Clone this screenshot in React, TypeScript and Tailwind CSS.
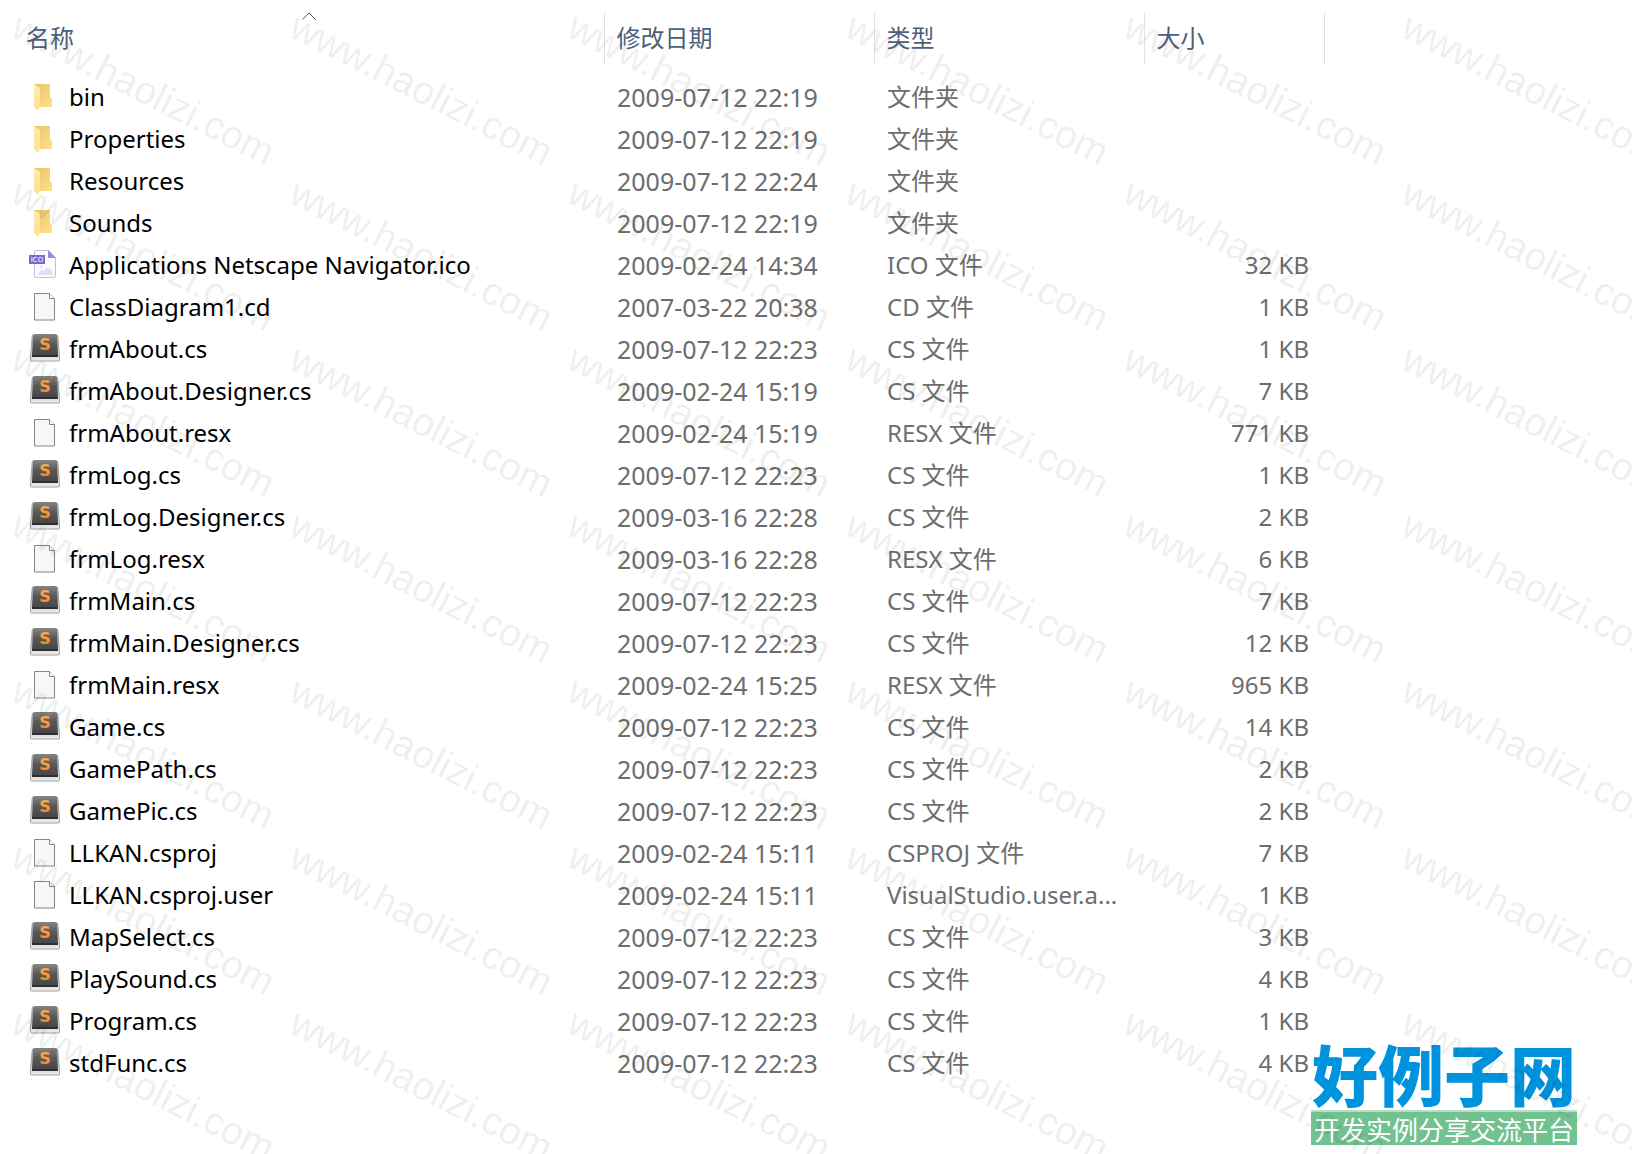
import clsx from 'clsx';

type FileKind = 'folder' | 'ico' | 'blank' | 'sublime';

interface FileEntry {
  name: string;
  date: string;
  type: string;
  size: string;
  kind: FileKind;
}

const files: FileEntry[] = [
  { name: 'bin', date: '2009-07-12 22:19', type: '文件夹', size: '', kind: 'folder' },
  { name: 'Properties', date: '2009-07-12 22:19', type: '文件夹', size: '', kind: 'folder' },
  { name: 'Resources', date: '2009-07-12 22:24', type: '文件夹', size: '', kind: 'folder' },
  { name: 'Sounds', date: '2009-07-12 22:19', type: '文件夹', size: '', kind: 'folder' },
  { name: 'Applications Netscape Navigator.ico', date: '2009-02-24 14:34', type: 'ICO 文件', size: '32 KB', kind: 'ico' },
  { name: 'ClassDiagram1.cd', date: '2007-03-22 20:38', type: 'CD 文件', size: '1 KB', kind: 'blank' },
  { name: 'frmAbout.cs', date: '2009-07-12 22:23', type: 'CS 文件', size: '1 KB', kind: 'sublime' },
  { name: 'frmAbout.Designer.cs', date: '2009-02-24 15:19', type: 'CS 文件', size: '7 KB', kind: 'sublime' },
  { name: 'frmAbout.resx', date: '2009-02-24 15:19', type: 'RESX 文件', size: '771 KB', kind: 'blank' },
  { name: 'frmLog.cs', date: '2009-07-12 22:23', type: 'CS 文件', size: '1 KB', kind: 'sublime' },
  { name: 'frmLog.Designer.cs', date: '2009-03-16 22:28', type: 'CS 文件', size: '2 KB', kind: 'sublime' },
  { name: 'frmLog.resx', date: '2009-03-16 22:28', type: 'RESX 文件', size: '6 KB', kind: 'blank' },
  { name: 'frmMain.cs', date: '2009-07-12 22:23', type: 'CS 文件', size: '7 KB', kind: 'sublime' },
  { name: 'frmMain.Designer.cs', date: '2009-07-12 22:23', type: 'CS 文件', size: '12 KB', kind: 'sublime' },
  { name: 'frmMain.resx', date: '2009-02-24 15:25', type: 'RESX 文件', size: '965 KB', kind: 'blank' },
  { name: 'Game.cs', date: '2009-07-12 22:23', type: 'CS 文件', size: '14 KB', kind: 'sublime' },
  { name: 'GamePath.cs', date: '2009-07-12 22:23', type: 'CS 文件', size: '2 KB', kind: 'sublime' },
  { name: 'GamePic.cs', date: '2009-07-12 22:23', type: 'CS 文件', size: '2 KB', kind: 'sublime' },
  { name: 'LLKAN.csproj', date: '2009-02-24 15:11', type: 'CSPROJ 文件', size: '7 KB', kind: 'blank' },
  { name: 'LLKAN.csproj.user', date: '2009-02-24 15:11', type: 'VisualStudio.user.a...', size: '1 KB', kind: 'blank' },
  { name: 'MapSelect.cs', date: '2009-07-12 22:23', type: 'CS 文件', size: '3 KB', kind: 'sublime' },
  { name: 'PlaySound.cs', date: '2009-07-12 22:23', type: 'CS 文件', size: '4 KB', kind: 'sublime' },
  { name: 'Program.cs', date: '2009-07-12 22:23', type: 'CS 文件', size: '1 KB', kind: 'sublime' },
  { name: 'stdFunc.cs', date: '2009-07-12 22:23', type: 'CS 文件', size: '4 KB', kind: 'sublime' },
];

const columns = ['名称', '修改日期', '类型', '大小'];

// Gradients shared by every row icon.
const IconDefs = () => (
  <svg width="0" height="0" className="absolute" aria-hidden="true">
    <defs>
      <linearGradient id="folder-back" x1="0" y1="0" x2="1" y2="1">
        <stop offset="0" stopColor="#e9c468" />
        <stop offset="1" stopColor="#ffe18b" />
      </linearGradient>
      <linearGradient id="folder-front" x1="0" y1="0" x2="0" y2="1">
        <stop offset="0" stopColor="#ffebad" />
        <stop offset="1" stopColor="#fddf8f" />
      </linearGradient>
      <linearGradient id="key-top" x1="0" y1="0" x2="0" y2="1">
        <stop offset="0" stopColor="#858585" />
        <stop offset="0.5" stopColor="#575757" />
        <stop offset="1" stopColor="#474747" />
      </linearGradient>
      <linearGradient id="key-base" x1="0" y1="0" x2="0" y2="1">
        <stop offset="0" stopColor="#9a9a9a" />
        <stop offset="1" stopColor="#ececec" />
      </linearGradient>
      <linearGradient id="key-letter" x1="0" y1="0" x2="0" y2="1">
        <stop offset="0" stopColor="#ffb35c" />
        <stop offset="1" stopColor="#ff7a12" />
      </linearGradient>
    </defs>
  </svg>
);

const FolderIcon = () => (
  <>
    <path d="M4 3h16v13l2 2v8H9z" fill="url(#folder-back)" />
    <path d="M4 3l6 4v18l-1 1v4l-5-4z" fill="url(#folder-front)" />
  </>
);

const BlankIcon = () => (
  <>
    <path d="M4.500 2.500h15l5 5v21.500h-20z" fill="#f7f7f7" stroke="#868686" />
    <path d="M19.500 2.500v5h5" fill="#fff" stroke="#868686" />
  </>
);

const IcoIcon = () => (
  <>
    <path d="M6 1.500h12.500l7 7v18.500q0 1.500-1.500 1.500h-18q-1.500 0-1.500-1.500v-24q0-1.500 1.500-1.500z" fill="#fcfbff" stroke="#c3bcea" />
    <path d="M18 1l8 8h-8z" fill="#9a8cda" />
    <path d="M8 26q1-5 4-5l2 1q2-4 5-3 3 1 4 7z" fill="#e3dff7" />
    <circle cx="11.500" cy="18" r="1.500" fill="#e3dff7" />
    <rect x="-1" y="6" width="16" height="9" fill="#7a68cb" />
    <text x="7" y="13" textAnchor="middle" className="font-['DejaVu_Sans',sans-serif] text-[7px]" fill="#fff">
      ICO
    </text>
  </>
);

const SublimeIcon = () => (
  <>
    <path d="M4 1.500h22q1.500 0 1.800 2l1.700 20v3.500q0 1-1 1h-27q-1 0-1-1v-3.500l1.700-20q.3-2 1.800-2z" fill="url(#key-base)" stroke="#a3a3a3" />
    <path d="M5 1h20q1.500 0 1.800 2l1.200 19h-26l1.200-19q.3-2 1.800-2z" fill="url(#key-top)" />
    <path d="M2 22h26v2h-26z" fill="#2f2f2f" />
    <text
      x="15"
      y="17"
      textAnchor="middle"
      className="font-['DejaVu_Sans',sans-serif] text-[16px] font-bold"
      fill="url(#key-letter)"
    >
      S
    </text>
  </>
);

const FileIcon = ({ kind }: { kind: FileKind }) => (
  <svg width="30" height="32" viewBox="0 0 30 32" className="shrink-0 overflow-visible" aria-hidden="true">
    {kind === 'folder' && <FolderIcon />}
    {kind === 'blank' && <BlankIcon />}
    {kind === 'ico' && <IcoIcon />}
    {kind === 'sublime' && <SublimeIcon />}
  </svg>
);

const Watermark = () => (
  <div
    className="pointer-events-none absolute inset-0 grid auto-rows-[166px] grid-cols-[repeat(6,278px)] overflow-hidden font-['Liberation_Sans',sans-serif] text-[39px] leading-10 text-black/8"
    aria-hidden="true"
  >
    {Array.from({ length: 42 }, (_, index) => (
      <div key={index} className="pt-1.5 pl-6">
        <span className="inline-block origin-top-left rotate-27">www.haolizi.com</span>
      </div>
    ))}
  </div>
);

const SiteLogo = () => (
  <div className="absolute right-[55px] bottom-[9px] w-[266px] text-center font-['Noto_Sans_CJK_SC',sans-serif] whitespace-nowrap">
    <p className="pb-1 text-[66px] leading-[68px] font-black text-[#0093dd]">好例子网</p>
    <p className="border-t-2 border-[#b4dfc4] bg-[#72c190] text-[26px] leading-[33px] text-white">
      开发实例分享交流平台
    </p>
  </div>
);

const App: React.FC = () => {
  return (
    <main className="relative min-h-screen overflow-hidden bg-white pt-3 font-['Noto_Sans','Noto_Sans_CJK_SC',sans-serif]">
      <IconDefs />
      <table className="w-full table-fixed border-collapse text-2xl leading-[42px] whitespace-nowrap text-[#6d6d6d]">
        <colgroup>
          <col className="w-[604px]" />
          <col className="w-[270px]" />
          <col className="w-[270px]" />
          <col className="w-[180px]" />
          <col />
        </colgroup>
        <thead className="leading-[52px] text-[#4c607a]">
          <tr>
            {columns.map((column, index) => (
              <th
                key={column}
                scope="col"
                className={clsx(
                  'relative border-r border-[#e2e2e2] p-0 text-left font-normal',
                  index === 0 ? 'pl-[26px]' : 'pl-3'
                )}
                aria-sort={index === 0 ? 'ascending' : undefined}
              >
                {column}
                {index === 0 && (
                  <svg
                    width="14"
                    height="8"
                    viewBox="0 0 14 8"
                    fill="none"
                    stroke="#555"
                    className="absolute top-0 left-[302px]"
                    aria-hidden="true"
                  >
                    <path d="M.5 7.500l6.500-6.500 6.500 6.500" />
                  </svg>
                )}
              </th>
            ))}
            <td />
          </tr>
        </thead>
        <tbody className="before:block before:h-3 before:content-['']">
          {files.map((file) => (
            <tr key={file.name}>
              <td className="p-0 pl-[30px] text-black">
                <div className="flex h-[42px] items-center gap-[9px]">
                  <FileIcon kind={file.kind} />
                  {file.name}
                </div>
              </td>
              <td className="p-0 pl-[13px] text-[25px]">{file.date}</td>
              <td className="p-0 pl-[13px]">{file.type}</td>
              <td className="p-0 pr-[15px] text-right">{file.size}</td>
              <td />
            </tr>
          ))}
        </tbody>
      </table>
      <SiteLogo />
      <Watermark />
    </main>
  );
};

export default App;
